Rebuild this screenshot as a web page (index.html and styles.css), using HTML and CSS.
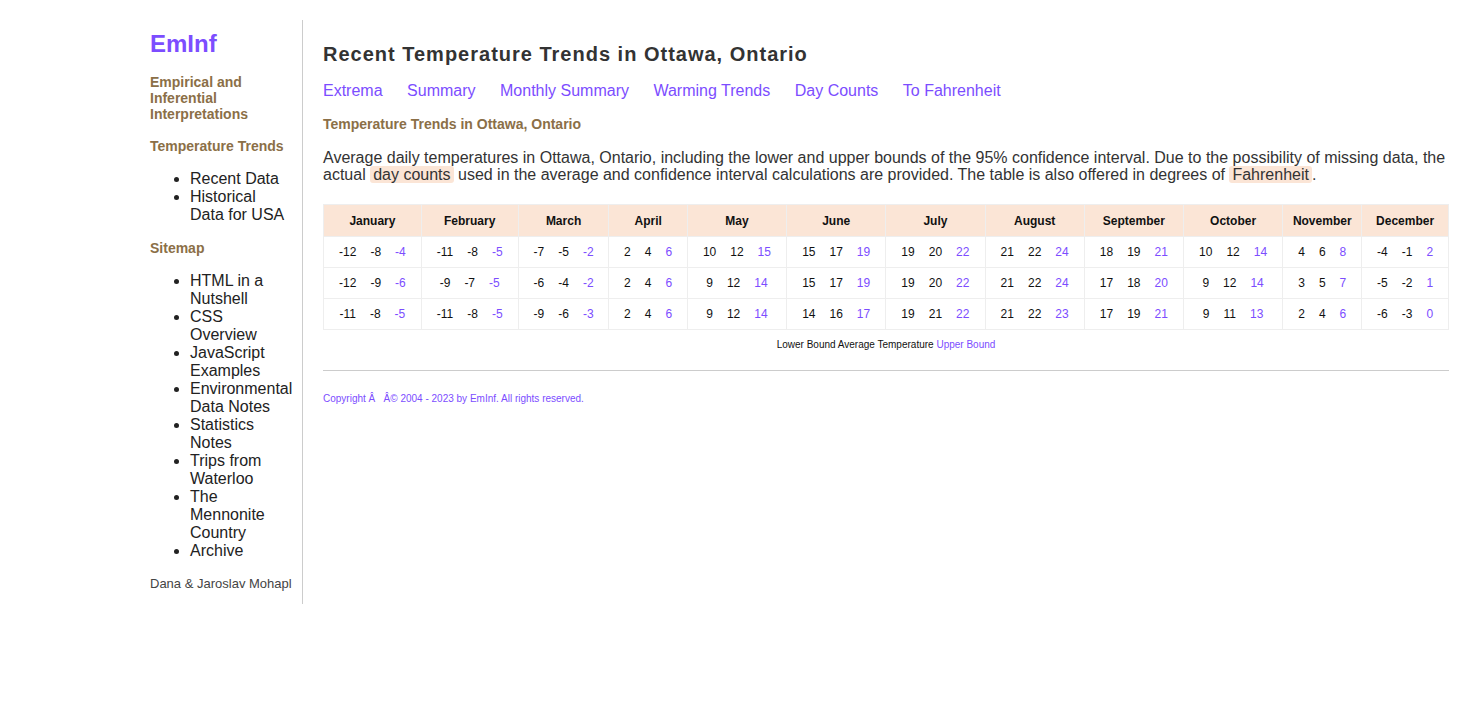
FILE: index.html
```html
<!DOCTYPE html>
<html lang="en">
<head>
<meta charset="utf-8">
<title>Recent Temperature Trends in Ottawa, Ontario</title>
<link rel="stylesheet" href="styles.css">
</head>
<body>
<div class="page">
  <aside class="sidebar">
    <div class="logo">EmInf</div>
    <div class="side-head">Empirical and Inferential Interpretations</div>
    <div class="side-head">Temperature Trends</div>
    <ul class="side-list">
      <li>Recent Data</li>
      <li>Historical Data for USA</li>
    </ul>
    <div class="side-head">Sitemap</div>
    <ul class="side-list">
      <li>HTML in a Nutshell</li>
      <li>CSS Overview</li>
      <li>JavaScript Examples</li>
      <li>Environmental Data Notes</li>
      <li>Statistics Notes</li>
      <li>Trips from Waterloo</li>
      <li>The Mennonite Country</li>
      <li>Archive</li>
    </ul>
    <div class="authors">Dana &amp; Jaroslav Mohapl</div>
  </aside>
  <main class="main">
    <h1 class="title">Recent Temperature Trends in Ottawa, Ontario</h1>
    <nav class="nav">
      <a>Extrema</a><a>Summary</a><a>Monthly Summary</a><a>Warming Trends</a><a>Day Counts</a><a>To Fahrenheit</a>
    </nav>
    <h3 class="sub">Temperature Trends in Ottawa, Ontario</h3>
    <p class="intro">Average daily temperatures in Ottawa, Ontario, including the lower and upper bounds of the 95% confidence interval. Due to the possibility of missing data, the actual <span class="hl">day counts</span> used in the average and confidence interval calculations are provided. The table is also offered in degrees of <span class="hl">Fahrenheit</span>.</p>
    <table class="temps">
      <thead>
        <tr><th>January</th><th>February</th><th>March</th><th>April</th><th>May</th><th>June</th><th>July</th><th>August</th><th>September</th><th>October</th><th>November</th><th>December</th></tr>
      </thead>
      <tbody>
        <tr>
          <td><span>-12</span><span>-8</span><span class="up">-4</span></td>
          <td><span>-11</span><span>-8</span><span class="up">-5</span></td>
          <td><span>-7</span><span>-5</span><span class="up">-2</span></td>
          <td><span>2</span><span>4</span><span class="up">6</span></td>
          <td><span>10</span><span>12</span><span class="up">15</span></td>
          <td><span>15</span><span>17</span><span class="up">19</span></td>
          <td><span>19</span><span>20</span><span class="up">22</span></td>
          <td><span>21</span><span>22</span><span class="up">24</span></td>
          <td><span>18</span><span>19</span><span class="up">21</span></td>
          <td><span>10</span><span>12</span><span class="up">14</span></td>
          <td><span>4</span><span>6</span><span class="up">8</span></td>
          <td><span>-4</span><span>-1</span><span class="up">2</span></td>
        </tr>
        <tr>
          <td><span>-12</span><span>-9</span><span class="up">-6</span></td>
          <td><span>-9</span><span>-7</span><span class="up">-5</span></td>
          <td><span>-6</span><span>-4</span><span class="up">-2</span></td>
          <td><span>2</span><span>4</span><span class="up">6</span></td>
          <td><span>9</span><span>12</span><span class="up">14</span></td>
          <td><span>15</span><span>17</span><span class="up">19</span></td>
          <td><span>19</span><span>20</span><span class="up">22</span></td>
          <td><span>21</span><span>22</span><span class="up">24</span></td>
          <td><span>17</span><span>18</span><span class="up">20</span></td>
          <td><span>9</span><span>12</span><span class="up">14</span></td>
          <td><span>3</span><span>5</span><span class="up">7</span></td>
          <td><span>-5</span><span>-2</span><span class="up">1</span></td>
        </tr>
        <tr>
          <td><span>-11</span><span>-8</span><span class="up">-5</span></td>
          <td><span>-11</span><span>-8</span><span class="up">-5</span></td>
          <td><span>-9</span><span>-6</span><span class="up">-3</span></td>
          <td><span>2</span><span>4</span><span class="up">6</span></td>
          <td><span>9</span><span>12</span><span class="up">14</span></td>
          <td><span>14</span><span>16</span><span class="up">17</span></td>
          <td><span>19</span><span>21</span><span class="up">22</span></td>
          <td><span>21</span><span>22</span><span class="up">23</span></td>
          <td><span>17</span><span>19</span><span class="up">21</span></td>
          <td><span>9</span><span>11</span><span class="up">13</span></td>
          <td><span>2</span><span>4</span><span class="up">6</span></td>
          <td><span>-6</span><span>-3</span><span class="up">0</span></td>
        </tr>
      </tbody>
    </table>
    <div class="legend">Lower Bound Average Temperature <span class="up">Upper Bound</span></div>
    <hr class="rule">
    <div class="copyright">Copyright Â&nbsp;&nbsp;&nbsp;Â© 2004 - 2023 by EmInf. All rights reserved.</div>
  </main>
</div>
</body>
</html>
```

FILE: styles.css
```css
html, body {
  margin: 0;
  padding: 0;
  background: #fff;
}
body {
  font-family: "Liberation Sans", Arial, sans-serif;
  color: #333;
}
.page {
  display: flex;
  align-items: flex-start;
  padding: 20px 20px 0 150px;
}
.sidebar {
  width: 153px;
  flex: none;
  border-right: 1px solid #ccc;
  padding-top: 10px;
  padding-bottom: 12px;
  box-sizing: border-box;
}
.logo {
  font-size: 24px;
  font-weight: bold;
  color: #7c4dff;
  line-height: 28px;
  margin-bottom: 16px;
}
.side-head {
  font-size: 14px;
  font-weight: bold;
  color: #8b6f47;
  line-height: 16px;
  margin-bottom: 16px;
}
.side-list {
  margin: 0 0 16px 0;
  padding-left: 40px;
  padding-right: 8px;
  font-size: 16px;
  line-height: 18px;
  color: #222;
}
.authors {
  font-size: 13px;
  color: #444;
  line-height: 16px;
  margin-top: 16px;
}
.main {
  flex: 1;
  min-width: 0;
  padding-left: 20px;
}
.title {
  font-size: 20px;
  font-weight: bold;
  letter-spacing: 1px;
  color: #333;
  margin: 21px 0 0 0;
  line-height: 26px;
}
.nav {
  display: flex;
  gap: 24.5px;
  margin-top: 14px;
  font-size: 16px;
  line-height: 20px;
}
.nav a {
  color: #7c4dff;
}
.sub {
  font-size: 14px;
  font-weight: bold;
  color: #8b6f47;
  margin: 15px 0 0 0;
  line-height: 16px;
}
.intro {
  font-size: 16px;
  line-height: 17px;
  margin: 17px 0 0 0;
  color: #333;
}
.hl {
  background: #fbe5d6;
  border-radius: 3px;
  padding: 0 3px;
}
.temps {
  width: 100%;
  border-collapse: collapse;
  margin-top: 21px;
  font-size: 12px;
}
.temps th {
  background: #fbe5d6;
  font-weight: bold;
  color: #111;
  height: 31px;
  padding: 0 8px;
  border: 1px solid #eee;
}
.temps td {
  text-align: center;
  height: 30px;
  padding: 0 6px;
  border: 1px solid #eee;
  color: #111;
  white-space: nowrap;
}
.temps td span {
  margin: 0 7px;
}
.up {
  color: #7c4dff;
}
.legend {
  text-align: center;
  font-size: 10px;
  color: #111;
  margin-top: 9px;
  line-height: 12px;
}
.rule {
  border: 0;
  border-top: 1px solid #ccc;
  margin: 19px 0 0 0;
}
.copyright {
  font-size: 10px;
  color: #7c4dff;
  margin-top: 22px;
  line-height: 12px;
}
```
